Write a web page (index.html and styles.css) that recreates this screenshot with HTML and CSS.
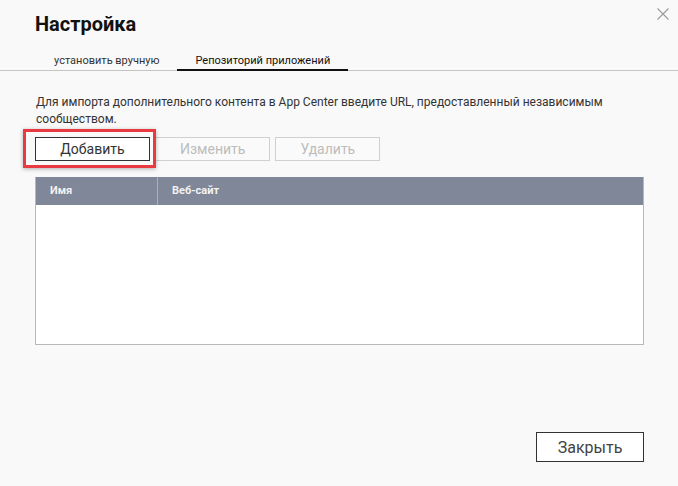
FILE: index.html
```html
<!DOCTYPE html>
<html lang="ru">

<head>
  <meta charset="UTF-8">
  <title>Настройка</title>
  <link rel="stylesheet" href="styles.css">
</head>

<body>

  <!-- Dialog header -->
  <div class="head">
    <h1>Настройка</h1>
    <button class="close" title="Закрыть">
      <svg width="12" height="12" viewBox="0 0 12 12">
        <path d="M0.5 0.5 L11.5 11.5 M11.5 0.5 L0.5 11.5" stroke="#9a9a9a" stroke-width="1.1" fill="none" />
      </svg>
    </button>
  </div>

  <!-- Tabs -->
  <div class="tabs">
    <div class="tab">установить вручную</div>
    <div class="tab active">Репозиторий приложений</div>
  </div>

  <div class="content">
    <p class="desc">Для импорта дополнительного контента в App Center введите URL, предоставленный независимым сообществом.</p>

    <div class="actions">
      <span class="highlight"><button class="btn">Добавить</button></span>
      <button class="btn" disabled>Изменить</button>
      <button class="btn" disabled>Удалить</button>
    </div>

    <!-- Repository list -->
    <div class="grid">
      <div class="grid-head">
        <div class="col col-name">Имя</div>
        <div class="col col-site">Веб-сайт</div>
      </div>
      <div class="grid-body"></div>
    </div>

    <div class="footer">
      <button class="btn btn-close">Закрыть</button>
    </div>
  </div>

</body>

</html>
```

FILE: styles.css
```css
/* Global */
body {
  margin: 0;
  font-family: Roboto, "Liberation Sans", sans-serif;
  background-color: #f9f9f9;
  color: #333;
  width: 678px;
  height: 486px;
  overflow: hidden;
}

/* Header */
.head {
  display: flex;
  justify-content: space-between;
  align-items: flex-start;
  padding: 0 9px 0 35px;
}

.head h1 {
  margin: 0;
  padding-top: 11px;
  font-size: 20px;
  line-height: 26px;
  font-weight: bold;
  color: #111;
}

.close {
  margin-top: 8px;
  padding: 0;
  border: none;
  background: none;
  width: 12px;
  height: 12px;
  cursor: pointer;
}

.close svg {
  display: block;
}

/* Tabs */
.tabs {
  display: flex;
  margin-top: 15px;
  padding-left: 36px;
  height: 18px;
  border-bottom: 1px solid #c4c4c4;
}

.tab {
  padding: 0 18px;
  font-size: 11px;
  line-height: 17px;
  color: #333;
  border-bottom: 2px solid transparent;
  height: 17px;
}

.tab.active {
  color: #111;
  border-bottom-color: #111;
}

/* Content */
.content {
  padding: 0 34px 0 35px;
}

.desc {
  margin: 23px 0 0;
  font-size: 12px;
  line-height: 17px;
  color: #333;
  padding-left: 1px;
}

.actions {
  display: flex;
  gap: 5px;
  margin-top: 9px;
}

.btn {
  height: 24px;
  padding: 0 24px;
  font-family: Roboto, "Liberation Sans", sans-serif;
  font-size: 14px;
  color: #333;
  background-color: #fff;
  border: 1px solid #333;
  cursor: pointer;
}

.btn:disabled {
  color: #bdbdbd;
  background-color: #fafafa;
  border-color: #d0d0d0;
  cursor: default;
}

.actions .highlight .btn {
  width: 115px;
}

/* Red annotation frame around the add button */
.highlight {
  position: relative;
  display: inline-block;
}

.highlight .btn {
  display: block;
}

.highlight::after {
  content: "";
  position: absolute;
  top: -8px;
  left: -12px;
  right: -6px;
  bottom: -7px;
  border: 3px solid #ea3a41;
  box-shadow: 0 1px 4px rgba(0, 0, 0, 0.3);
  pointer-events: none;
}

/* Grid */
.grid {
  margin-top: 16px;
  border: 1px solid #b8b8b8;
  border-top: none;
  background-color: #fff;
}

.grid-head {
  display: flex;
  height: 28px;
  background-color: #7f8798;
}

.col {
  font-size: 11px;
  font-weight: bold;
  line-height: 28px;
  color: #f2f2f2;
  padding-left: 14px;
}

.col-name {
  width: 107px;
  border-right: 1px solid #aab0bc;
}

.grid-body {
  height: 139px;
}

/* Footer */
.footer {
  display: flex;
  justify-content: flex-end;
  margin-top: 87px;
}

.btn-close {
  width: 108px;
  height: 30px;
  padding: 0;
  font-size: 16px;
  color: #444;
}
```
